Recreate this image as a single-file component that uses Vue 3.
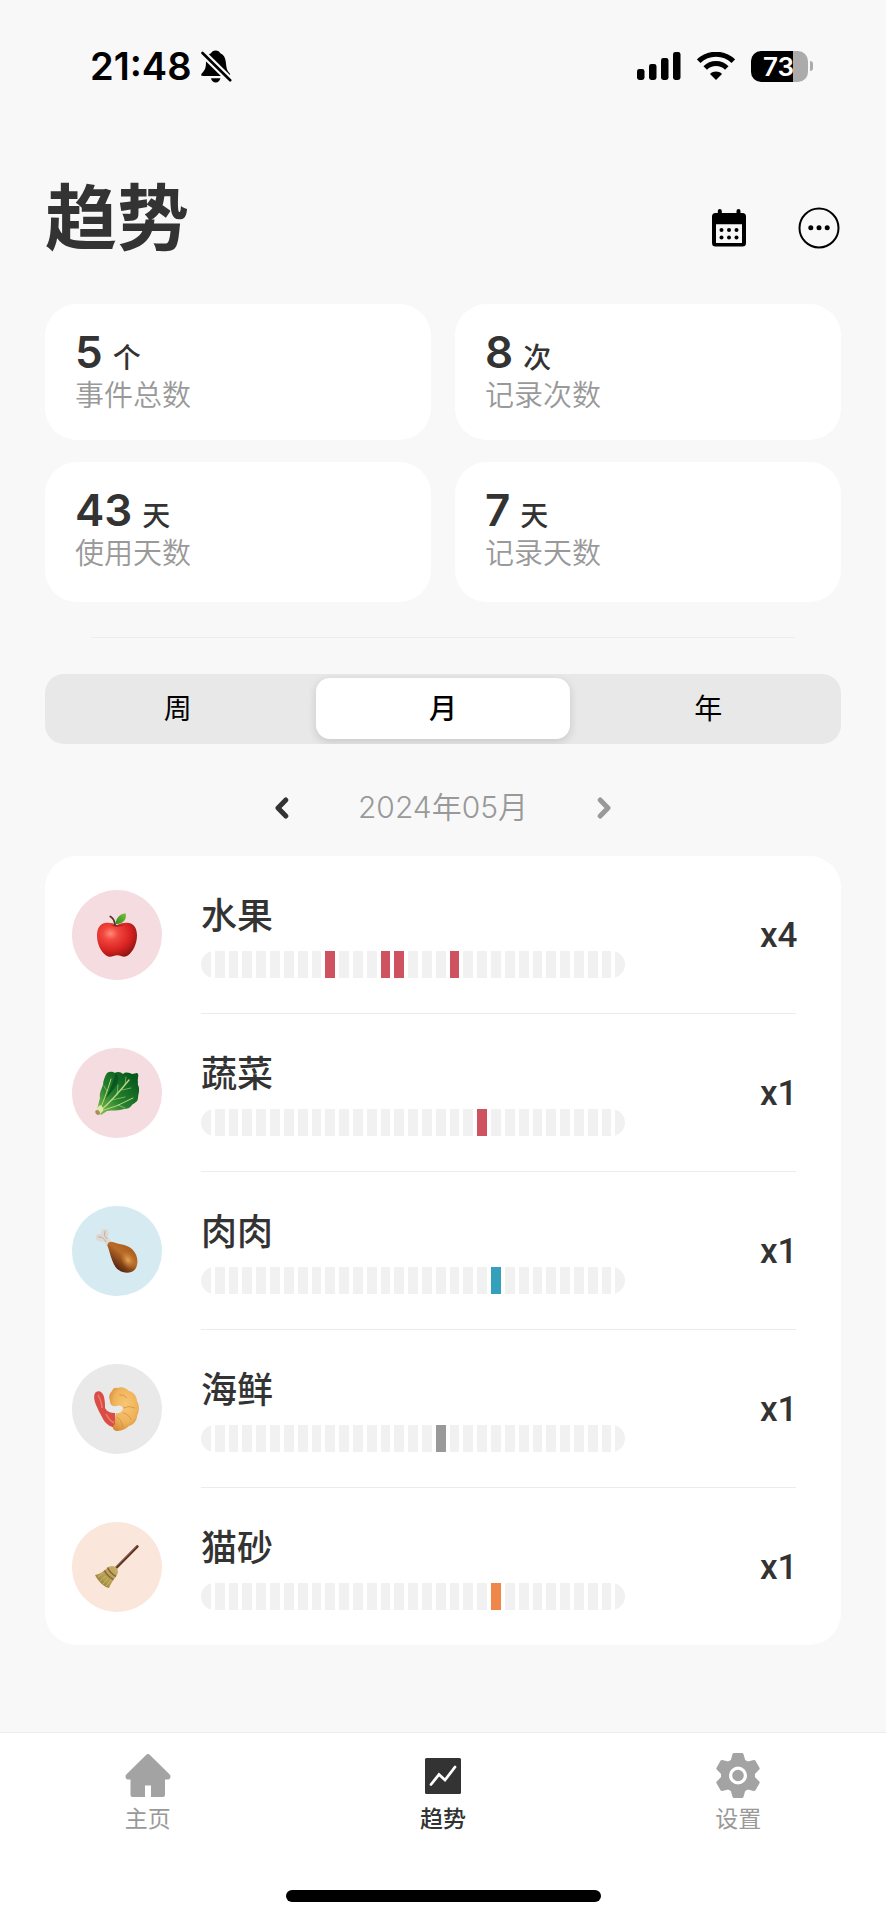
<script setup>
import { ref } from 'vue'

const stats = [
  { value: 5, unit: '个', label: '事件总数' },
  { value: 8, unit: '次', label: '记录次数' },
  { value: 43, unit: '天', label: '使用天数' },
  { value: 7, unit: '天', label: '记录天数' }
]

const ranges = ['周', '月', '年']
const range = ref('月')

const days = 31
const events = [
  { id: 'apple', name: '水果', count: 4, tone: 'red', marks: [10, 14, 15, 19] },
  { id: 'greens', name: '蔬菜', count: 1, tone: 'red', marks: [21] },
  { id: 'drumstick', name: '肉肉', count: 1, tone: 'blue', marks: [22] },
  { id: 'shrimp', name: '海鲜', count: 1, tone: 'gray', marks: [18] },
  { id: 'broom', name: '猫砂', count: 1, tone: 'orange', marks: [22] }
]
</script>

<template>
  <div class="page">
    <div class="status">
      <div class="status-left">
        <span class="time">21:48</span>
        <svg class="bell" width="31" height="33" viewBox="0 0 31 33" aria-hidden="true">
          <path d="M14.7.5C12.3.5 10.7 1.6 10 3.3 6.5 4.700 5 8 5 12c0 6-1 8-4 11.2C-.5 24.800.2 26 2 26h25c2 0 2.800-1.300 1.600-2.700C25.600 20 25.400 17.500 24.800 12c-.5-4.500-2.300-7.500-5.500-8.700C18.600 1.600 17 .5 14.700.5z" />
          <path d="M10 28.300h9.400c-.6 2.700-2.200 4.200-4.700 4.200s-4.200-1.500-4.700-4.200z" />
          <path d="M0 1.500 30.500 31.500" stroke="#f8f8f8" stroke-width="7" />
          <path d="M1.500 3 29.200 30.300" stroke="#000" stroke-width="2.6" stroke-linecap="round" />
        </svg>
      </div>
      <div class="status-right">
        <svg width="44" height="28" viewBox="0 0 44 28" aria-hidden="true">
          <rect x="0" y="17" width="7.500" height="11" rx="2.400" />
          <rect x="12" y="12" width="7.500" height="16" rx="2.400" />
          <rect x="24" y="6" width="7.500" height="22" rx="2.400" />
          <rect x="36" y="0" width="7.500" height="28" rx="2.400" />
        </svg>
        <svg width="38" height="28" viewBox="0 0 38 28" aria-hidden="true">
          <g fill="none" stroke="#000" stroke-width="5">
            <path d="M1.700 9.200a24.900 24.900 0 0 1 34.600 0" />
            <path d="M8.200 16a15.400 15.400 0 0 1 21.600 0" />
          </g>
          <path d="M19 28 13 21.900c3.500-3.200 8.500-3.200 12 0z" />
        </svg>
        <div class="battery"><span class="battery-body">73</span><i class="battery-cap"></i></div>
      </div>
    </div>

    <main class="content">
      <header class="header">
        <h1>趋势</h1>
        <div class="actions">
          <button type="button" aria-label="日历">
            <svg width="34" height="38" viewBox="0 0 34 38">
              <rect x="5.800" y="0" width="4" height="10" rx="2" />
              <rect x="24.500" y="0" width="4" height="10" rx="2" />
              <path fill-rule="evenodd" d="M3.500 4h27A3.500 3.500 0 0 1 34 7.500v26.500a3.500 3.500 0 0 1-3.500 3.500h-27A3.500 3.500 0 0 1 0 34V7.500A3.500 3.500 0 0 1 3.500 4zM4 15.300V34h26V15.300z" />
              <g>
                <circle cx="9.500" cy="21" r="2" /><circle cx="17" cy="21" r="2" /><circle cx="24.500" cy="21" r="2" />
                <circle cx="9.500" cy="28.500" r="2" /><circle cx="17" cy="28.500" r="2" /><circle cx="24.500" cy="28.500" r="2" />
              </g>
            </svg>
          </button>
          <button type="button" aria-label="更多">
            <svg width="42" height="42" viewBox="0 0 42 42">
              <circle cx="21" cy="21" r="19.500" fill="none" stroke="#000" stroke-width="2" />
              <circle cx="12.800" cy="20.800" r="2.500" /><circle cx="21" cy="20.800" r="2.500" /><circle cx="29.200" cy="20.800" r="2.500" />
            </svg>
          </button>
        </div>
      </header>

      <section class="stats">
        <div v-for="s in stats" :key="s.label" class="stat">
          <div class="stat-value"><b>{{ s.value }}</b><span>{{ s.unit }}</span></div>
          <div class="stat-label">{{ s.label }}</div>
        </div>
      </section>

      <hr class="divider" />

      <div class="segments" role="group" aria-label="时间范围">
        <button
          v-for="r in ranges"
          :key="r"
          type="button"
          :class="{ active: r === range }"
          :aria-pressed="r === range"
          @click="range = r"
        >{{ r }}</button>
      </div>

      <div class="period">
        <button type="button" class="prev" aria-label="上个月">
          <svg width="14" height="22" viewBox="0 0 14 22"><path d="M10.800 3 3 11l7.800 8" /></svg>
        </button>
        <span>2024年05月</span>
        <button type="button" class="next" aria-label="下个月">
          <svg width="14" height="22" viewBox="0 0 14 22"><path d="M3.200 3 11 11l-7.800 8" /></svg>
        </button>
      </div>

      <ul class="list">
        <li v-for="e in events" :key="e.id" class="item">
          <div class="avatar" :class="e.tone">
            <svg v-if="e.id === 'apple'" width="44" height="44" viewBox="0 0 44 44">
              <defs>
                <radialGradient id="apple-skin" cx=".34" cy=".32" r=".75">
                  <stop offset="0" stop-color="#ff8a78" /><stop offset=".25" stop-color="#f2483f" />
                  <stop offset=".65" stop-color="#d92322" /><stop offset="1" stop-color="#8f1512" />
                </radialGradient>
                <linearGradient id="apple-leaf" x1="0" y1="1" x2="1" y2="0">
                  <stop offset="0" stop-color="#2d8a1d" /><stop offset="1" stop-color="#7cc23a" />
                </linearGradient>
              </defs>
              <path d="M22 12c4-2 8-2.800 12-2 5.500 1.200 8 6 8 12.500 0 8-4 16-8.500 19.500-2.500 2-5 2-7.500 1-2.500-.9-5-.9-7.500 0-3 1.200-5.500 1-8-1C6 38.500 2 31 2 22.500 2 16 4.500 11 10 10c4-.7 8 0 12 2z" fill="url(#apple-skin)" />
              <path d="M15 11.500q7 5 15-.3-7 1.500-15 .3z" fill="#8d1712" opacity=".6" />
              <path d="M15.300 3.500q4 2 4.800 8.500" fill="none" stroke="#553323" stroke-width="1.800" stroke-linecap="round" />
              <path d="M20.500 11C21 4.500 25 1 30.500.3 32.500 6 28 11.500 20.500 11z" fill="url(#apple-leaf)" />
            </svg>

            <svg v-else-if="e.id === 'greens'" width="44" height="44" viewBox="0 0 44 44">
              <defs>
                <linearGradient id="green-leaf" x1=".1" y1=".9" x2=".85" y2=".1">
                  <stop offset="0" stop-color="#75b54b" /><stop offset=".4" stop-color="#26822f" /><stop offset="1" stop-color="#07591d" />
                </linearGradient>
              </defs>
              <path d="M2 39c1-5 2-8 3-12-1-4 1-8 3-13 0-4 2-9 4-12 3-2 6-1 8 0 3-2 6-1 8 1 3-3 7-1 9 0 3 0 5-2 6 0 1 3-1 5 0 8-1 3 2 5 1 9 0 2-1 4-1 7 0 4-4 5-6 7-2 3-5 4-8 4-5 2-12 1-17 2l-6 4z" fill="url(#green-leaf)" />
              <path d="M21 1c-2 8-6 18-11 28 3-5 12-13 13-19 1-4-1-6-2-9z" fill="#0a5821" />
              <g fill="none" stroke="#b9d77f" stroke-linecap="round">
                <path d="M4 41Q17 30 34 9" stroke-width="1.400" />
                <path d="M4 40Q10 28 16 8M6 40q16-4 32-13" stroke-width="1" />
                <path d="m22 24 1-10M27 19l9-2M17 29l13-3M12 20l-3-5M23 34l7 3M30 14l1-8" stroke-width=".6" />
              </g>
              <path d="m0 39 5-5q4 2 3 6l-4 4q-4-2-4-5z" fill="#dfe7ae" /><ellipse cx="2.600" cy="41.400" rx="2" ry="2.600" transform="rotate(-40 2.600 41.400)" fill="#a78e59" />
            </svg>

            <svg v-else-if="e.id === 'drumstick'" width="44" height="44" viewBox="0 0 44 44">
              <defs>
                <linearGradient id="meat" x1=".8" y1=".2" x2=".3" y2=".85">
                  <stop offset="0" stop-color="#ac5d1f" /><stop offset=".4" stop-color="#ba6c28" /><stop offset="1" stop-color="#57260d" />
                </linearGradient>
                <radialGradient id="meat-light"><stop offset="0" stop-color="#e6a657" /><stop offset="1" stop-color="#c67a32" stop-opacity="0" /></radialGradient>
              </defs>
              <path d="M9.500 13C6 12.500 1 13 .7 8.500.6 5.500 3.500 4 6 5 5.500 1.500 8-.8 10.500-.5c3.500.5 3.700 4.500 2.500 8l4 7-5 3z" fill="#ded9d2" />
              <path d="M3 8q5-1 8 5M10 2q-2 5 2 8" fill="none" stroke="#b9b2ab" stroke-width="1" />
              <path d="M12.500 17C12 13 16 12 18.500 13.300 25 16 32 15 37.500 20.500 43 26 44 35 40 40.500 35 46 25 44 20.500 38 16 31 15 23 12.500 17z" fill="url(#meat)" />
              <ellipse cx="33" cy="31" rx="7" ry="10" transform="rotate(-28 33 31)" fill="url(#meat-light)" />
            </svg>

            <svg v-else-if="e.id === 'shrimp'" width="46" height="44" viewBox="-1 0 46 44">
              <defs>
                <radialGradient id="batter" cx=".55" cy=".4" r=".65">
                  <stop offset="0" stop-color="#f8c673" /><stop offset=".6" stop-color="#efb45b" /><stop offset="1" stop-color="#d68a38" />
                </radialGradient>
              </defs>
              <path d="M1 5c4-2 7 1 8 5 1 4 1 8 1 11 2 4 6 5 10 5l1 15C14 40 9 35 7 30 4 25 3 22 1 18-1 13-2 8 1 5z" fill="#d94d45" />
              <path d="M3 8q4 7 4 13M11 27q3 6 8 9" fill="none" stroke="#f07c6c" stroke-width="1.500" />
              <path d="M23 1c4-2 9 1 11 3 5 1 8 6 8 10 3 5 2 11 0 15 0 5-4 9-8 10-4 4-9 5-13 5-4-1-4-5-1-7-1-4 1-7 1-11 4 1 7-2 7-5-1-3-4-3-7-2-4 1-6-2-6-5-2-5 0-8 2-10 1-3 3-4 6-3z" fill="url(#batter)" />
              <path d="M24 8q5-1 8 3M28 21q6-3 12 0M28 26q6 1 8 7M22 30q5 3 6 10" fill="none" stroke="#cc8236" stroke-width="1" opacity=".6" />
            </svg>

            <svg v-else width="44" height="44" viewBox="0 0 44 44">
              <defs>
                <linearGradient id="straw" x1="1" y1="0" x2="0" y2="1">
                  <stop offset="0" stop-color="#c8b268" /><stop offset=".6" stop-color="#b39b4f" /><stop offset="1" stop-color="#746329" />
                </linearGradient>
              </defs>
              <path d="M42.300 1.500 20 24" stroke="#5a3425" stroke-width="2.600" stroke-linecap="round" />
              <path d="M41.500 1.500 20 23" stroke="#9a654a" stroke-width=".8" />
              <path d="M13.500 22c4-2 7-.5 8.500 1.500s1.300 5-1 8c-3 4-5 7-7 11.500-5-1-11-7-14-13 5-1 9-4 13.500-8z" fill="url(#straw)" />
              <path d="M12.500 22.500q3 6 8.500 9M9.500 25.500q3 6 9 9" fill="none" stroke="#89673b" stroke-width="1.600" />
              <path d="m8 28-5 4M11 31l-6 5M13 33l-5 6M16 35l-5 6" stroke="#cdbd74" stroke-width=".8" />
            </svg>
          </div>

          <div class="item-body">
            <div class="item-main">
              <div class="item-name">{{ e.name }}</div>
              <div class="bars">
                <i v-for="d in days" :key="d" :class="{ [e.tone]: e.marks.includes(d) }"></i>
              </div>
            </div>
            <div class="item-count">x{{ e.count }}</div>
          </div>
        </li>
      </ul>
    </main>

    <nav class="tabbar">
      <div class="tabs">
        <a href="#home">
          <svg width="46" height="46" viewBox="0 0 46 46">
            <path d="M20.800 2.200q2.200-2.200 4.400 0L44.700 21.500c1.700 2 .7 5-2 5H40V42q0 2-2 2H26V32.500h-6V44H7.500q-2 0-2-2V26.500H3.300c-2.700 0-3.700-3-2-5z" />
          </svg>
          <span>主页</span>
        </a>
        <a href="#trend" class="current" aria-current="page">
          <svg width="46" height="46" viewBox="0 0 46 46">
            <rect x="5" y="5" width="36" height="36" rx="1.500" />
            <path d="m11 31.500 8-10 6 5.500 10-13" fill="none" stroke="#fff" stroke-width="2.800" stroke-linecap="round" />
          </svg>
          <span>趋势</span>
        </a>
        <a href="#settings">
          <svg width="46" height="46" viewBox="0 0 46 46">
            <g stroke="#a3a3a3" stroke-width="3" stroke-linejoin="round">
              <circle cx="23" cy="22.500" r="15.500" />
              <path d="M19 1.500h8l2 7v28l-2 7h-8l-2-7v-28z" />
              <path d="M19 1.500h8l2 7v28l-2 7h-8l-2-7v-28z" transform="rotate(60 23 22.500)" />
              <path d="M19 1.500h8l2 7v28l-2 7h-8l-2-7v-28z" transform="rotate(120 23 22.500)" />
            </g>
            <circle cx="23" cy="22.500" r="7.400" fill="none" stroke="#fff" stroke-width="3.200" />
          </svg>
          <span>设置</span>
        </a>
      </div>
      <div class="home-indicator"></div>
    </nav>
  </div>
</template>

<style>
body {
  background: #f8f8f8;
}
</style>

<style scoped>
* {
  box-sizing: border-box;
}

.page {
  display: flex;
  flex-direction: column;
  min-height: 100vh;
  background: #f8f8f8;
  color: #333;
  font-family: Inter, "Noto Sans CJK SC", sans-serif;
}

svg {
  display: block;
}

button {
  padding: 0;
  border: 0;
  background: none;
  color: inherit;
  font: inherit;
  cursor: pointer;
}

.status {
  display: flex;
  justify-content: space-between;
  align-items: center;
  padding: 46px 73px 0 90px;
  color: #000;
}

.status-left,
.status-right {
  display: flex;
  align-items: center;
  height: 40px;
}

.status-left {
  gap: 9px;
}

.status-right {
  gap: 16px;
}

.time {
  font-size: 38px;
  line-height: 40px;
  font-weight: 600;
}

.battery {
  display: flex;
  align-items: center;
  gap: 2px;
}

.battery-body {
  width: 57px;
  height: 31px;
  padding-right: 2px;
  border-radius: 10px;
  background: linear-gradient(90deg, #000 74%, #ababab 74%);
  color: #fff;
  font-size: 26px;
  line-height: 31px;
  font-weight: 600;
  text-align: center;
}

.battery-cap {
  width: 3px;
  height: 10px;
  border-radius: 0 3px 3px 0;
  background: #ababab;
}

.content {
  padding: 92px 45px 87px;
}

.header {
  display: flex;
  justify-content: space-between;
  align-items: flex-end;
}

h1 {
  margin: 0;
  font-size: 72px;
  line-height: 80px;
  font-weight: 700;
}

.actions {
  display: flex;
  gap: 46px;
}

.actions button {
  display: grid;
  place-items: center;
  width: 44px;
  height: 60px;
}

.stats {
  display: grid;
  grid-template-columns: 1fr 1fr;
  grid-template-rows: minmax(136px, auto) minmax(140px, auto);
  gap: 22px 24px;
  margin-top: 46px;
}

.stat {
  padding: 22px 30px;
  border-radius: 32px;
  background: #fff;
}

.stat-value {
  display: flex;
  align-items: baseline;
  gap: 10px;
  height: 52px;
  line-height: 52px;
}

.stat-value b {
  font-size: 44px;
  font-weight: 600;
}

.stat-value span {
  font-size: 28px;
  font-weight: 500;
}

.stat-label {
  color: #999;
  font-size: 29px;
  line-height: 36px;
  font-weight: 350;
}

.divider {
  height: 1px;
  margin: 35px 46px 36px;
  border: 0;
  background: #ededed;
}

.segments {
  display: grid;
  grid-template-columns: repeat(3, 1fr);
  border-radius: 19px;
  background: #e8e8e8;
  overflow: hidden;
  color: #000;
}

.segments button {
  height: 61px;
  margin: 4px 6px 5px;
  padding-bottom: 3px;
  border-radius: 14px;
  font-size: 28px;
}

.segments .active {
  background: #fff;
  box-shadow: 0 3px 10px rgba(0, 0, 0, 0.14);
  font-weight: 500;
}

.period {
  display: flex;
  justify-content: center;
  align-items: center;
  gap: 46px;
  height: 60px;
  margin-top: 34px;
  color: #999;
  font-size: 30px;
  line-height: 40px;
  font-weight: 350;
}

.period span {
  padding-bottom: 2px;
}

.period button {
  display: grid;
  place-items: center;
  width: 60px;
  height: 60px;
}

.period path {
  fill: none;
  stroke: currentColor;
  stroke-width: 5;
  stroke-linecap: round;
  stroke-linejoin: round;
}

.period .prev {
  color: #333;
}

.list {
  margin: 18px 0 0;
  padding: 0;
  border-radius: 32px;
  background: #fff;
  list-style: none;
}

.item {
  display: flex;
  align-items: center;
  gap: 39px;
  padding: 0 45px 0 27px;
}

.avatar {
  display: grid;
  place-items: center;
  flex: none;
  width: 90px;
  height: 90px;
  border-radius: 50%;
}

.avatar.red {
  background: #f5dce0;
}

.avatar.blue {
  background: #d6ebf1;
}

.avatar.gray {
  background: #e9e9e9;
}

.avatar.orange {
  background: #fbe6dc;
}

.item-body {
  display: flex;
  justify-content: space-between;
  align-items: center;
  flex: 1;
  min-width: 0;
  height: 158px;
  padding-top: 2px;
  border-bottom: 1px solid #ececec;
}

.item:last-child .item-body {
  height: 157px;
  border-bottom: 0;
}

.item-main {
  flex: 0 1 424px;
}

.item-name {
  font-size: 36px;
  line-height: 44px;
  font-weight: 500;
}

.bars {
  display: flex;
  gap: 4px;
  height: 27px;
  margin-top: 13px;
  border-radius: 14px;
  overflow: hidden;
}

.bars i {
  flex: 1;
  background: #f1f1f1;
}

.bars .red {
  background: #cf5260;
}

.bars .blue {
  background: #359fbe;
}

.bars .gray {
  background: #999;
}

.bars .orange {
  background: #ef874b;
}

.item-count {
  width: 36px;
  font-family: Roboto, sans-serif;
  font-size: 35px;
  line-height: 44px;
  font-weight: 500;
}

.tabbar {
  margin-top: auto;
  padding-bottom: 18px;
  border-top: 1px solid #ececec;
  background: #fff;
}

.tabs {
  display: grid;
  grid-template-columns: repeat(3, 1fr);
  padding-top: 20px;
}

.tabs a {
  display: flex;
  flex-direction: column;
  align-items: center;
  gap: 5px;
  color: #999;
  font-size: 23px;
  line-height: 31px;
  text-decoration: none;
}

.tabs svg {
  fill: #a3a3a3;
}

.tabs .current {
  color: #333;
  font-weight: 500;
}

.tabs .current svg {
  fill: #333;
}

.home-indicator {
  width: 315px;
  height: 12px;
  margin: 55px auto 0;
  border-radius: 6px;
  background: #000;
}
</style>
